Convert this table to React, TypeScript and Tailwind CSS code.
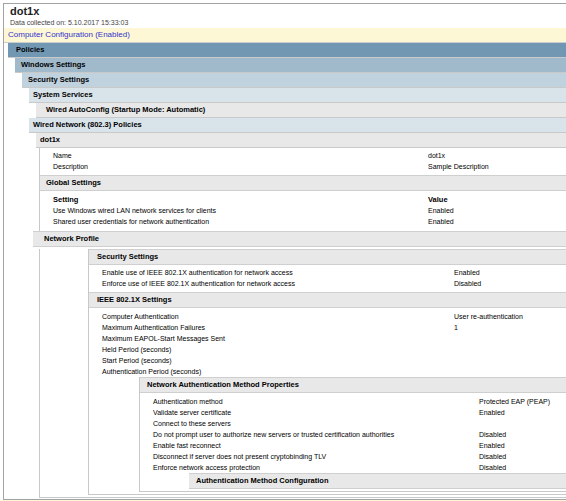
import React from "react";

type Row = [string, string];

function Rows({ rows, labelW, bold }: { rows: Row[]; labelW: string; bold?: boolean }) {
  return (
    <div>
      {rows.map(([a, b], i) => (
        <div key={i} className={"flex h-[11px] leading-[11px] pl-[13px] whitespace-nowrap " + (bold && i === 0 ? "font-bold text-[7.5px]" : "text-[7px]")}>
          <div className={labelW}>{a}</div>
          <div>{b}</div>
        </div>
      ))}
    </div>
  );
}

export default function App() {
  const band = "h-[15px] border-b border-[#c9c9c9] leading-[14px] text-[7.5px] font-bold text-black whitespace-nowrap";
  const sband = "h-[16px] border-y border-[#cfcfcf] bg-[#e8e8e8] leading-[14px] text-[7.5px] font-bold text-black whitespace-nowrap";
  return (
    <div className="w-[566px] h-[501px] overflow-hidden bg-white font-['Liberation_Sans',Arial,sans-serif] text-black">
      <div className="mt-[3px] ml-[3px] border-l border-t border-b border-[#a3a3a3] pb-[1px]">
        <div className="h-[14px] leading-[14px] pl-[6px] text-[11px] font-semibold text-[#222]">dot1x</div>
        <div className="h-[10px] leading-[10px] pl-[6px] text-[7px] text-[#444]">Data collected on: 5.10.2017 15:33:03</div>
        <div className="h-[15px] border-b border-[#cdcdcd] bg-[#FEF7D6] pl-[4px] leading-[14px] text-[8px] text-[#3333CC]">Computer Configuration (Enabled)</div>
        <div className={band + " ml-[4px] pl-[8px] bg-[#7197B3]"}>Policies</div>
        <div className={band + " ml-[11px] pl-[6px] bg-[#A0BACB]"}>Windows Settings</div>
        <div className={band + " ml-[18px] pl-[6px] bg-[#C0D2DE]"}>Security Settings</div>
        <div className={band + " ml-[25px] pl-[4px] bg-[#D9E3EA]"}>System Services</div>
        <div className={band + " ml-[32px] pl-[10px] bg-[#E8E8E8]"}>Wired AutoConfig (Startup Mode: Automatic)</div>
        <div className={band + " ml-[25px] pl-[4px] bg-[#D9E3EA]"}>Wired Network (802.3) Policies</div>
        <div className={band + " ml-[32px] pl-[4px] bg-[#E8E8E8]"}>dot1x</div>

        {/* dot1x content */}
        <div className="ml-[35px] border-l border-[#c8c8c8] pt-[2px] pb-[4px]">
          <Rows labelW="w-[375px]" rows={[["Name", "dot1x"], ["Description", "Sample Description"]]} />
          <div className={sband + " mt-[3px] pl-[6px]"}>Global Settings</div>
          <div className="pt-[3px]">
            <Rows
              labelW="w-[375px]"
              bold
              rows={[
                ["Setting", "Value"],
                ["Use Windows wired LAN network services for clients", "Enabled"],
                ["Shared user credentials for network authentication", "Enabled"],
              ]}
            />
          </div>
        </div>

        <div className={sband + " ml-[29px] pl-[11px]"}>Network Profile</div>

        {/* Network Profile content */}
        <div className="ml-[35px] border-l border-b border-[#c8c8c8] pb-[2px]">
          <div className="ml-[48px] mt-[2px] border-l border-b border-[#c8c8c8] pb-[2px]">
            <div className={sband + " pl-[8px]"}>Security Settings</div>
            <div className="pt-[2px]">
              <Rows
                labelW="w-[352px]"
                rows={[
                  ["Enable use of IEEE 802.1X authentication for network access", "Enabled"],
                  ["Enforce use of IEEE 802.1X authentication for network access", "Disabled"],
                ]}
              />
            </div>
            <div className={sband + " mt-[3px] pl-[8px]"}>IEEE 802.1X Settings</div>
            <div className="pt-[3px]">
              <Rows
                labelW="w-[352px]"
                rows={[
                  ["Computer Authentication", "User re-authentication"],
                  ["Maximum Authentication Failures", "1"],
                  ["Maximum EAPOL-Start Messages Sent", ""],
                  ["Held Period (seconds)", ""],
                  ["Start Period (seconds)", ""],
                  ["Authentication Period (seconds)", ""],
                ]}
              />
            </div>
            <div className="ml-[50px] border-l border-b border-[#c8c8c8]">
              <div className={sband + " pl-[7px]"}>Network Authentication Method Properties</div>
              <div className="pt-[3px]">
                <Rows
                  labelW="w-[326px]"
                  rows={[
                    ["Authentication method", "Protected EAP (PEAP)"],
                    ["Validate server certificate", "Enabled"],
                    ["Connect to these servers", ""],
                    ["Do not prompt user to authorize new servers or trusted certification authorities", "Disabled"],
                    ["Enable fast reconnect", "Enabled"],
                    ["Disconnect if server does not present cryptobinding TLV", "Disabled"],
                    ["Enforce network access protection", "Disabled"],
                  ]}
                />
              </div>
              <div className={sband + " ml-[49px] pl-[7px]"}>Authentication Method Configuration</div>
              <div className="h-[2px]" />
            </div>
          </div>
        </div>
      </div>
      <div className="h-[20px] bg-[#FEF7D6]" />
    </div>
  );
}
